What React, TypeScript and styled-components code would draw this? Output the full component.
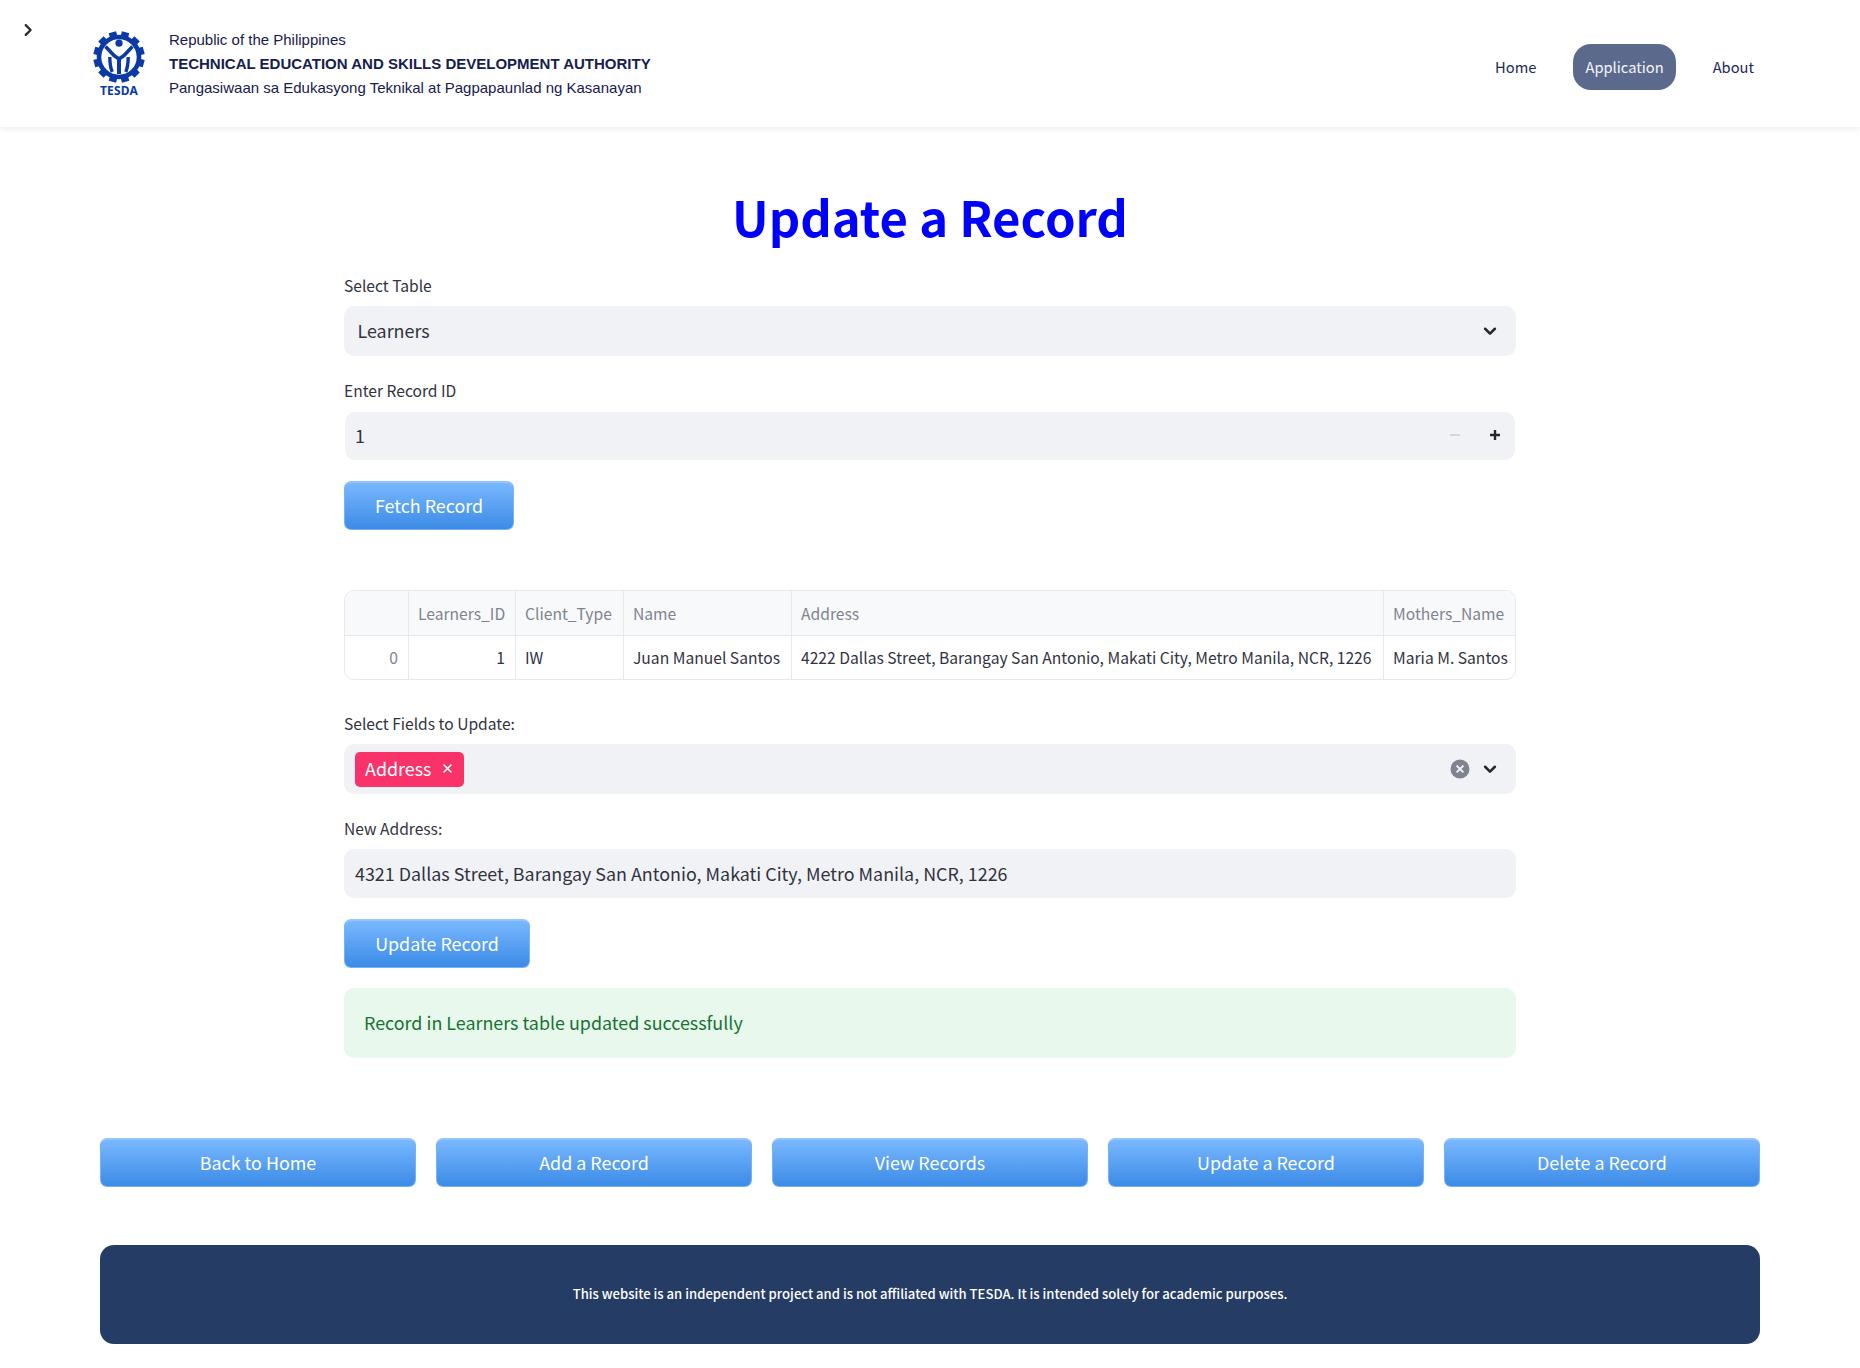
import React from "react";
import styled, { createGlobalStyle } from "styled-components";

const Global = createGlobalStyle`
  html, body { margin: 0; padding: 0; background: #fff; }
  body { font-family: "Noto Sans CJK SC", "Noto Sans", sans-serif; color: #31333f; }
  * { box-sizing: border-box; }
`;

const Page = styled.div`
  width: 1860px;
  height: 1368px;
  overflow: hidden;
  display: flex;
  flex-direction: column;
`;

const Header = styled.header`
  height: 127px;
  flex: none;
  display: flex;
  align-items: flex-start;
  background: #fff;
  box-shadow: 0 2px 6px rgba(0, 0, 0, 0.08);
`;

const Collapse = styled.div`
  width: 92px;
  flex: none;
  padding: 21px 0 0 19px;
  color: #31333f;
  svg { display: block; }
`;

const Logo = styled.div`
  width: 54px;
  flex: none;
  margin-top: 31px;
  margin-right: 23px;
  display: flex;
  flex-direction: column;
  align-items: center;
  svg { display: block; }
`;

const LogoWord = styled.span`
  font: 700 12px/12px "Noto Sans", sans-serif;
  color: #0b3aa6;
  margin-top: 2px;
  letter-spacing: 0.2px;
`;

const Agency = styled.div`
  display: flex;
  flex-direction: column;
  gap: 6px;
  padding-top: 31px;
  font-family: "Liberation Sans", Arial, sans-serif;
  color: #16204f;
`;

const AgencyLine = styled.div<{ $bold?: boolean }>`
  font-size: 15px;
  line-height: 18px;
  font-weight: ${(p) => (p.$bold ? 700 : 400)};
  white-space: nowrap;
`;

const Nav = styled.nav`
  margin-left: auto;
  margin-top: 44px;
  margin-right: 94px;
  display: flex;
  align-items: center;
  gap: 25px;
`;

const NavLink = styled.a<{ $active?: boolean }>`
  height: 46px;
  display: flex;
  align-items: center;
  justify-content: center;
  padding: 0 12px 2px;
  border-radius: 18px;
  font-size: 14.7px;
  color: ${(p) => (p.$active ? "#f3f5fa" : "#1b2a57")};
  background: ${(p) => (p.$active ? "#5b6a8c" : "transparent")};
`;

const Main = styled.main`
  width: 1172px;
  margin: 60px auto 0;
  display: flex;
  flex-direction: column;
`;

const Title = styled.h1`
  margin: 0 0 25px;
  height: 64px;
  text-align: center;
  font-size: 49px;
  line-height: 58px;
  font-weight: 700;
  color: #0000ff;
`;

const Label = styled.label`
  display: block;
  font-size: 15.6px;
  line-height: 19px;
  height: 20px;
  color: #31333f;
`;

const Select = styled.div`
  height: 50px;
  margin-top: 10px;
  padding: 0 17px 2px 13.5px;
  border-radius: 10px;
  background: #f0f2f6;
  display: flex;
  align-items: center;
  font-size: 17.9px;
  justify-content: space-between;
  svg { display: block; margin-top: 2px; }
`;

const NumberBox = styled.div`
  height: 48px;
  margin: 11px 1px 0;
  padding: 0 14px 2px 10px;
  border-radius: 10px;
  background: #f0f2f6;
  display: flex;
  align-items: center;
  font-size: 17.9px;
`;

const Step = styled.span<{ $off?: boolean }>`
  width: 12px;
  display: flex;
  justify-content: center;
  color: ${(p) => (p.$off ? "#d3d6e2" : "#262730")};
  svg { display: block; }
`;

const Steps = styled.div`
  margin-left: auto;
  display: flex;
  gap: 28px;
`;

const Button = styled.button`
  height: 49px;
  padding: 0 0 2px;
  border: 1px solid #78b3f8;
  border-top: 2px solid #92c5ff;
  border-radius: 7px;
  background: linear-gradient(180deg, #79b8ff 0%, #3b8be6 100%);
  color: #fff;
  font: inherit;
  font-size: 17.9px;
  display: flex;
  align-items: center;
  justify-content: center;
`;

const FetchButton = styled(Button)`
  width: 170px;
  margin-top: 21px;
`;

const UpdateButton = styled(Button)`
  width: 186px;
  margin-top: 21px;
`;

const DataTable = styled.div`
  margin-top: 60px;
  height: 90px;
  border: 1px solid #e6e8ee;
  border-radius: 10px;
  overflow: hidden;
  display: grid;
  grid-template-columns: 64px 107px 108px 168px 592px 1fr;
  grid-template-rows: 45px 1fr;
  font-size: 15.65px;
`;

const HeadCell = styled.div`
  background: #f8f9fb;
  color: #7f8390;
  display: flex;
  align-items: center;
  padding: 0 8px 0 9px;
  white-space: nowrap;
  border-right: 1px solid #e6e8ee;
  border-bottom: 1px solid #e6e8ee;
  &:nth-child(6) { border-right: 0; }
`;

const Cell = styled.div<{ $right?: boolean; $muted?: boolean; $last?: boolean }>`
  display: flex;
  align-items: center;
  padding: ${(p) => (p.$right ? "0 10px 1px 9px" : "0 9px 1px")};
  white-space: nowrap;
  justify-content: ${(p) => (p.$right ? "flex-end" : "flex-start")};
  color: ${(p) => (p.$muted ? "#7f8390" : "#31333f")};
  border-right: ${(p) => (p.$last ? "0" : "1px solid #e6e8ee")};
`;

const FieldLabel = styled(Label)<{ $gap: number }>`
  margin-top: ${(p) => p.$gap}px;
`;

const Multi = styled(Select)`
  padding-left: 11px;
  padding-bottom: 0;
  justify-content: flex-start;
  svg { margin-top: 0; }
`;

const Tag = styled.span`
  height: 35px;
  width: 109px;
  padding: 0 0 2px 10px;
  border-radius: 5px;
  background: #f9326a;
  color: #fff;
  font-size: 17.9px;
  display: flex;
  align-items: center;
  gap: 11px;
`;

const MultiTools = styled.div`
  margin-left: auto;
  display: flex;
  align-items: center;
  gap: 11px;
`;

const TextBox = styled.div`
  height: 49px;
  margin-top: 10px;
  padding: 0 11px 2px;
  border-radius: 10px;
  background: #f0f2f6;
  display: flex;
  align-items: center;
  font-size: 17.9px;
`;

const Success = styled.div`
  margin-top: 20px;
  height: 70px;
  padding: 0 20px 2px;
  border-radius: 10px;
  background: #e8f8ec;
  color: #177233;
  font-size: 17.9px;
  display: flex;
  align-items: center;
`;

const BottomNav = styled.div`
  width: 1660px;
  margin: 80px auto 0;
  display: grid;
  grid-template-columns: repeat(5, 1fr);
  gap: 20px;
`;

const Footer = styled.footer`
  width: 1660px;
  height: 99px;
  margin: 58px auto 0;
  padding-bottom: 2px;
  border-radius: 14px;
  background: #253c64;
  color: #fff;
  font-size: 13.1px;
  font-weight: 500;
  display: flex;
  align-items: center;
  justify-content: center;
`;

const Chevron = ({ size = 18 }: { size?: number }) => (
  <svg width={size} height={size} viewBox="0 0 24 24" fill="none" stroke="#262730" strokeWidth="3.4" strokeLinecap="round" strokeLinejoin="round">
    <path d="M5.5 9l6.5 6.5 6.5-6.5" />
  </svg>
);

const ChevronSide = () => (
  <svg width="18" height="18" viewBox="0 0 24 24" fill="none" stroke="#262730" strokeWidth="3" strokeLinecap="round" strokeLinejoin="round">
    <path d="M9 5.5l6.5 6.5-6.5 6.5" />
  </svg>
);

const Gear = () => {
  const teeth = Array.from({ length: 12 }, (_, i) => i * 30 + 15);
  return (
    <svg width="52" height="52" viewBox="0 0 52 52">
      <circle cx="26" cy="26" r="20" fill="none" stroke="#0b3aa6" strokeWidth="4.6" />
      {teeth.map((a) => (
        <rect key={a} x="22.2" y="0.4" width="7.6" height="7" fill="#0b3aa6" transform={`rotate(${a} 26 26)`} />
      ))}
      <circle cx="26" cy="12.2" r="3.6" fill="#0b3aa6" />
      <path d="M12.5 15.5L21 24.5l5 3.5 5-3.5 8.5-9" fill="none" stroke="#0b3aa6" strokeWidth="3.6" strokeLinejoin="round" />
      <path d="M26 28V43" stroke="#0b3aa6" strokeWidth="4" />
      <path d="M16.8 26c0 6 .6 10.5 2.4 15M35.2 26c0 6-.6 10.5-2.4 15" stroke="#0b3aa6" strokeWidth="3.4" fill="none" />
    </svg>
  );
};

const Minus = () => (
  <svg width="12" height="12" viewBox="0 0 12 12"><path d="M1 6h10" stroke="currentColor" strokeWidth="2" /></svg>
);
const Plus = () => (
  <svg width="12" height="12" viewBox="0 0 12 12"><path d="M1 6h10M6 1v10" stroke="currentColor" strokeWidth="2.4" /></svg>
);

const ClearAll = () => (
  <svg width="20" height="20" viewBox="0 0 20 20">
    <circle cx="10" cy="10" r="9.5" fill="#7f8390" />
    <path d="M6.6 6.6l6.8 6.8M13.4 6.6l-6.8 6.8" stroke="#f0f2f6" strokeWidth="2" />
  </svg>
);

const TagClose = () => (
  <svg width="11" height="11" viewBox="0 0 11 11"><path d="M1.5 1.5l8 8M9.5 1.5l-8 8" stroke="#fff" strokeWidth="1.7" /></svg>
);

export default function App() {
  return (
    <Page>
      <Global />
      <Header>
        <Collapse><ChevronSide /></Collapse>
        <Logo>
          <Gear />
          <LogoWord>TESDA</LogoWord>
        </Logo>
        <Agency>
          <AgencyLine>Republic of the Philippines</AgencyLine>
          <AgencyLine $bold>TECHNICAL EDUCATION AND SKILLS DEVELOPMENT AUTHORITY</AgencyLine>
          <AgencyLine>Pangasiwaan sa Edukasyong Teknikal at Pagpapaunlad ng Kasanayan</AgencyLine>
        </Agency>
        <Nav>
          <NavLink>Home</NavLink>
          <NavLink $active>Application</NavLink>
          <NavLink>About</NavLink>
        </Nav>
      </Header>
      <Main>
        <Title>Update a Record</Title>
        <Label>Select Table</Label>
        <Select>Learners<Chevron /></Select>
        <FieldLabel $gap={25}>Enter Record ID</FieldLabel>
        <NumberBox>
          1
          <Steps>
            <Step $off><Minus /></Step>
            <Step><Plus /></Step>
          </Steps>
        </NumberBox>
        <FetchButton>Fetch Record</FetchButton>
        <DataTable>
          <HeadCell />
          <HeadCell>Learners_ID</HeadCell>
          <HeadCell>Client_Type</HeadCell>
          <HeadCell>Name</HeadCell>
          <HeadCell>Address</HeadCell>
          <HeadCell>Mothers_Name</HeadCell>
          <Cell $right $muted>0</Cell>
          <Cell $right>1</Cell>
          <Cell>IW</Cell>
          <Cell>Juan Manuel Santos</Cell>
          <Cell>4222 Dallas Street, Barangay San Antonio, Makati City, Metro Manila, NCR, 1226</Cell>
          <Cell $last>Maria M. Santos</Cell>
        </DataTable>
        <FieldLabel $gap={34}>Select Fields to Update:</FieldLabel>
        <Multi>
          <Tag>Address<TagClose /></Tag>
          <MultiTools><ClearAll /><Chevron /></MultiTools>
        </Multi>
        <FieldLabel $gap={25}>New Address:</FieldLabel>
        <TextBox>4321 Dallas Street, Barangay San Antonio, Makati City, Metro Manila, NCR, 1226</TextBox>
        <UpdateButton>Update Record</UpdateButton>
        <Success>Record in Learners table updated successfully</Success>
      </Main>
      <BottomNav>
        <Button>Back to Home</Button>
        <Button>Add a Record</Button>
        <Button>View Records</Button>
        <Button>Update a Record</Button>
        <Button>Delete a Record</Button>
      </BottomNav>
      <Footer>This website is an independent project and is not affiliated with TESDA. It is intended solely for academic purposes.</Footer>
    </Page>
  );
}
